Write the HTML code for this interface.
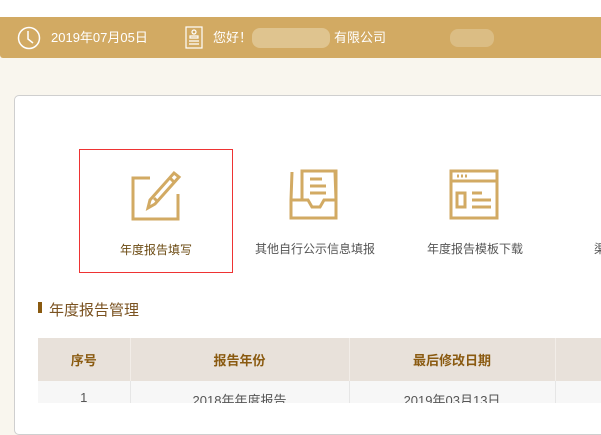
<!DOCTYPE html>
<html><head><meta charset="utf-8"><style>
*{margin:0;padding:0;box-sizing:border-box}
body{width:601px;height:403px;overflow:hidden;background:#f9f6ee;font-family:"Liberation Sans","Noto Sans CJK SC",sans-serif;position:relative}
.top{position:absolute;left:0;top:0;width:601px;height:17px;background:#fff}
.bar{position:absolute;left:0;top:17px;width:601px;height:41px;background:#d2aa63;color:#fff;font-size:13px;border-radius:0 0 0 3px}
.bar span{position:absolute;top:13px;line-height:16px}
.blur{position:absolute;background:#e0c590;border-radius:8px;height:18px;top:12px}
.card{position:absolute;left:14px;top:95px;width:600px;height:340px;background:#fff;border:1px solid #cfcfcf;border-radius:5px}
.tile{position:absolute;top:149px;width:154px;height:124px;text-align:center}
.tile .lbl{position:absolute;top:91px;left:-20px;right:-20px;font-size:12px;color:#555}
.tile svg{position:absolute;top:20px;left:50px}
.h{position:absolute;left:38px;top:299px;font-size:15px;color:#7a5220}
.h i{position:absolute;left:0;top:3px;width:4px;height:11px;background:#8a5a10}
.tw{position:absolute;left:38px;top:338px;width:563px;overflow:hidden;height:65px}
table{border-collapse:collapse;font-size:13px;table-layout:fixed;width:620px}
th{background:#e8e1da;color:#8a5a10;height:43px;font-weight:bold;border-right:1px solid #f2ede8}
td{background:#f7f7f7;height:30px;text-align:center;color:#555;border-right:1px solid #e6e6e6;vertical-align:top;padding-top:9px}
</style></head><body>
<div class="top"></div>
<div class="bar">
<svg style="position:absolute;left:17px;top:9px" width="24" height="24" viewBox="0 0 24 24" fill="none" stroke="#fff" stroke-width="1.5"><circle cx="12" cy="12" r="10.5"/><path d="M11 5v8l5 4"/></svg>
<span style="left:51px">2019年07月05日</span>
<svg style="position:absolute;left:185px;top:9px" width="18" height="23" viewBox="0 0 18 23" fill="none" stroke="#fff" stroke-width="1.2"><rect x="1" y="1" width="16" height="21"/><circle cx="9" cy="6" r="2"/><path d="M5 12v-2h8v2zM4 15h10M4 18h10"/></svg>
<span style="left:213px">您好！</span>
<span style="left:334px">有限公司</span>
<div class="blur" style="left:252px;width:78px;height:20px;top:11px;background:#dfc48f"></div>
<div class="blur" style="left:450px;width:44px;background:#dbbd84"></div>
</div>
<div class="card"></div>
<div class="tile" style="left:79px;border:1px solid #e33"><svg width="52" height="52" viewBox="0 0 52 52" fill="none" stroke="#d2aa63" stroke-width="3"><path d="M20 8H3v41h45V24"/><path d="M44 3l5 4-24 27-7 4 2-8z"/><path d="M40 8l5 5M24 28l4 4"/></svg><div class="lbl" style="color:#6b4a12">年度报告填写</div></div>
<div class="tile" style="left:238px"><svg width="52" height="52" viewBox="0 0 52 52" fill="none" stroke="#d2aa63" stroke-width="3"><path d="M14 32V2h34v30M22 10h12M22 17h16M22 24h16"/><path d="M3 31h17l4 7h8l4-7h13M3 31v18h45V31M3 31l1-28M48 31l-1-28"/></svg><div class="lbl">其他自行公示信息填报</div></div>
<div class="tile" style="left:398px"><svg width="52" height="52" viewBox="0 0 52 52" fill="none" stroke="#d2aa63" stroke-width="3"><path d="M3 2h46v47H3zM3 12h46M9 7h2M13 7h2M17 7h2"/><rect x="9" y="24" width="8" height="14"/><path d="M24 24h10M24 31h19M24 38h19"/></svg><div class="lbl">年度报告模板下载</div></div>
<div style="position:absolute;left:594px;top:240px;font-size:12px;color:#555">渠</div>
<div class="h"><i></i><span style="margin-left:11px">年度报告管理</span></div>
<div class="tw"><table><colgroup><col style="width:92px"><col style="width:219px"><col style="width:206px"><col style="width:103px"></colgroup><tr><th>序号</th><th>报告年份</th><th>最后修改日期</th><th></th></tr>
<tr><td>1</td><td>2018年年度报告</td><td>2019年03月13日</td><td>已</td></tr></table></div>
</body></html>
